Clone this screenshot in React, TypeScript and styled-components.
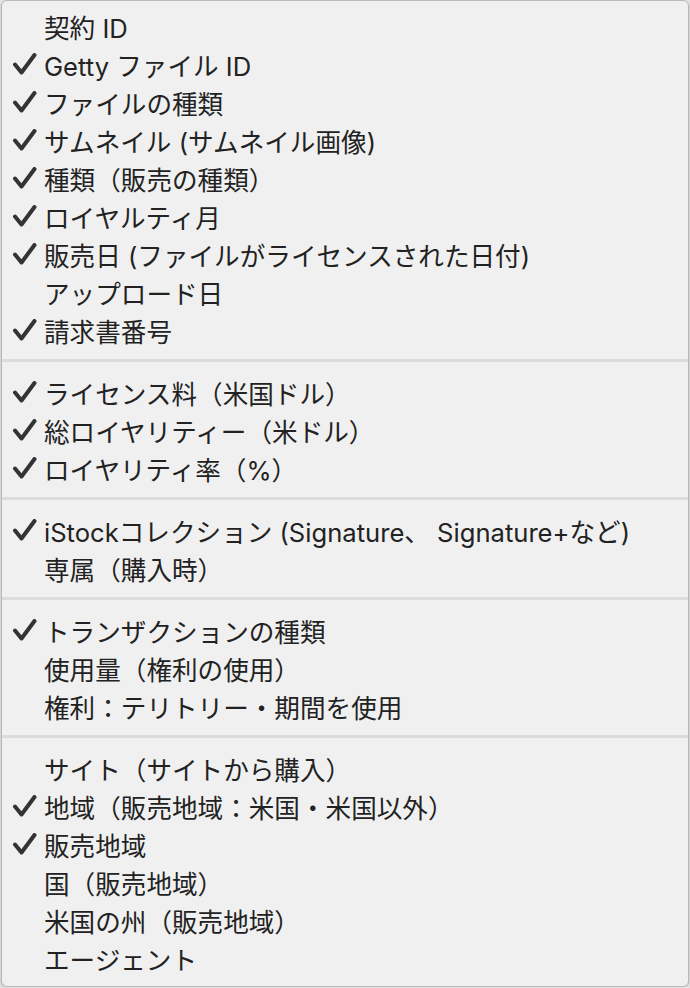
import React from "react";
import styled, {createGlobalStyle} from "styled-components";

const GlobalStyle = createGlobalStyle`
  html, body {
    margin: 0;
    padding: 0;
    background: #e4e4e4;
  }

  body {
    font-family: Inter, "Noto Sans CJK JP", sans-serif;
  }
`

const StyledMenu = styled.ul`
  box-sizing: border-box;
  width: 688px;
  margin: 0 0 0 1px;
  padding: 6px 0 9px;
  list-style: none;
  background-color: #f0f0f0;
  border: 1px solid #b9b9b9;
  border-radius: 6px;
  box-shadow: 0 1px 3px rgba(0, 0, 0, 0.18);
`

const MenuItem = styled.li<{ checked?: boolean }>`
  display: flex;
  align-items: center;
  height: 38px;
  padding-left: 10px;
  font-size: 25.6px;
  color: #222;
  white-space: nowrap;

  .menu-check {
    width: 32px;
    flex-shrink: 0;
    display: flex;
    align-items: center;
    visibility: ${({checked}) => checked ? 'visible' : 'hidden'};
  }
`

const Separator = styled.li`
  height: 3px;
  margin: 10px 0 11px;
  background-color: #dcdcdc;
`

const CheckIcon: React.FC = () => (
    <svg width="25" height="22" viewBox="0 0 25 22">
        <path d="M3 11.5 L9.5 19.5 L22.5 2" fill="none" stroke="#333" strokeWidth="4"
              strokeLinecap="round" strokeLinejoin="round"/>
    </svg>
)

type Entry = { label: string, checked?: boolean }

const sections: Entry[][] = [
    [
        {label: '契約 ID'},
        {label: 'Getty ファイル ID', checked: true},
        {label: 'ファイルの種類', checked: true},
        {label: 'サムネイル (サムネイル画像)', checked: true},
        {label: '種類（販売の種類）', checked: true},
        {label: 'ロイヤルティ月', checked: true},
        {label: '販売日 (ファイルがライセンスされた日付)', checked: true},
        {label: 'アップロード日'},
        {label: '請求書番号', checked: true},
    ],
    [
        {label: 'ライセンス料（米国ドル）', checked: true},
        {label: '総ロイヤリティー（米ドル）', checked: true},
        {label: 'ロイヤリティ率（%）', checked: true},
    ],
    [
        {label: 'iStockコレクション (Signature、 Signature+など)', checked: true},
        {label: '専属（購入時）'},
    ],
    [
        {label: 'トランザクションの種類', checked: true},
        {label: '使用量（権利の使用）'},
        {label: '権利：テリトリー・期間を使用'},
    ],
    [
        {label: 'サイト（サイトから購入）'},
        {label: '地域（販売地域：米国・米国以外）', checked: true},
        {label: '販売地域', checked: true},
        {label: '国（販売地域）'},
        {label: '米国の州（販売地域）'},
        {label: 'エージェント'},
    ],
]

const App: React.FC = () => {
    return (
        <>
            <GlobalStyle/>
            <StyledMenu>
                {sections.map((section, i) => (
                    <React.Fragment key={i}>
                        {i > 0 && <Separator/>}
                        {section.map(entry => (
                            <MenuItem key={entry.label} checked={entry.checked}>
                                <span className='menu-check'><CheckIcon/></span>
                                <span>{entry.label}</span>
                            </MenuItem>
                        ))}
                    </React.Fragment>
                ))}
            </StyledMenu>
        </>
    )
}

export default App
